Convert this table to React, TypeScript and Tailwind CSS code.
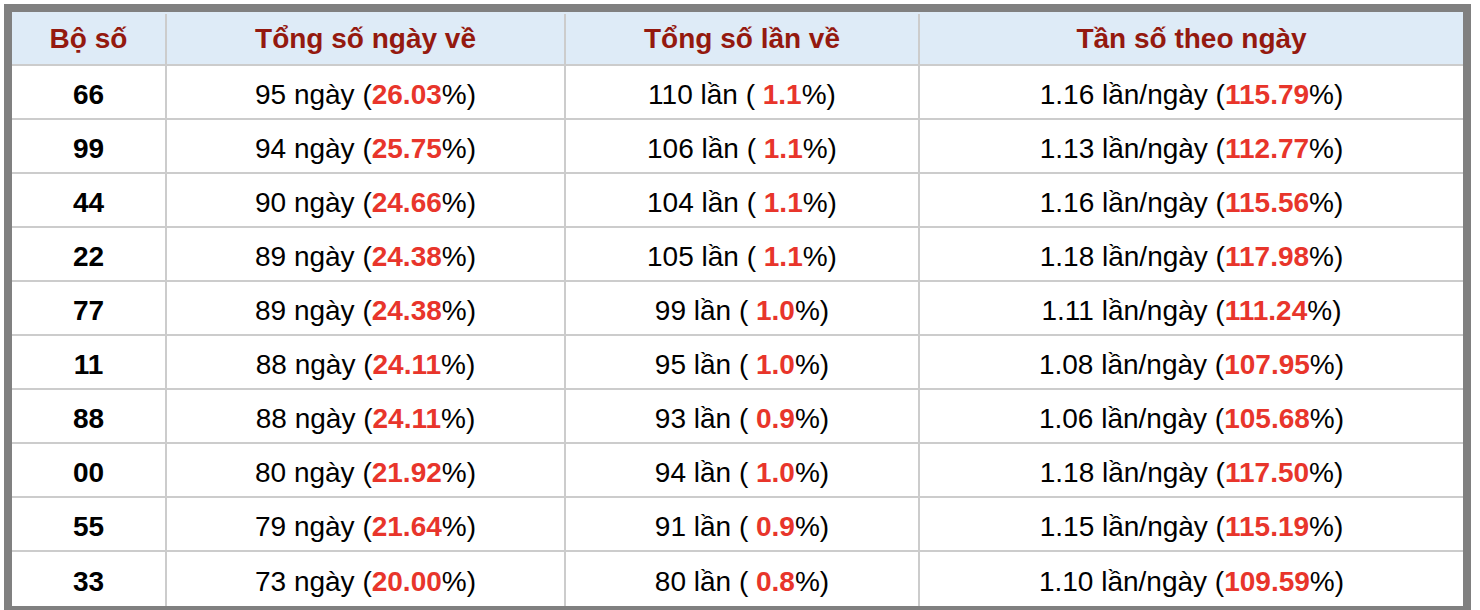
import React from 'react';

type Row = {
  so: string;
  ngay: number;
  ngayPct: string;
  lan: number;
  lanPct: string;
  tanSo: string;
  tanSoPct: string;
};

const rows: Row[] = [
  { so: '66', ngay: 95, ngayPct: '26.03', lan: 110, lanPct: '1.1', tanSo: '1.16', tanSoPct: '115.79' },
  { so: '99', ngay: 94, ngayPct: '25.75', lan: 106, lanPct: '1.1', tanSo: '1.13', tanSoPct: '112.77' },
  { so: '44', ngay: 90, ngayPct: '24.66', lan: 104, lanPct: '1.1', tanSo: '1.16', tanSoPct: '115.56' },
  { so: '22', ngay: 89, ngayPct: '24.38', lan: 105, lanPct: '1.1', tanSo: '1.18', tanSoPct: '117.98' },
  { so: '77', ngay: 89, ngayPct: '24.38', lan: 99, lanPct: '1.0', tanSo: '1.11', tanSoPct: '111.24' },
  { so: '11', ngay: 88, ngayPct: '24.11', lan: 95, lanPct: '1.0', tanSo: '1.08', tanSoPct: '107.95' },
  { so: '88', ngay: 88, ngayPct: '24.11', lan: 93, lanPct: '0.9', tanSo: '1.06', tanSoPct: '105.68' },
  { so: '00', ngay: 80, ngayPct: '21.92', lan: 94, lanPct: '1.0', tanSo: '1.18', tanSoPct: '117.50' },
  { so: '55', ngay: 79, ngayPct: '21.64', lan: 91, lanPct: '0.9', tanSo: '1.15', tanSoPct: '115.19' },
  { so: '33', ngay: 73, ngayPct: '20.00', lan: 80, lanPct: '0.8', tanSo: '1.10', tanSoPct: '109.59' },
];

const Red = ({ children }: { children: React.ReactNode }) => (
  <span className="font-bold text-[#e8352b]">{children}</span>
);

export default function App() {
  return (
    <div className="min-h-screen w-full bg-white pl-[4px] pt-[4px] font-['Liberation_Sans',Arial,sans-serif] text-[28px] text-black">
      <div className="w-[1467px] border-[8px] border-[#808080]">
        {/* Header */}
        <div className="flex h-[54px] border-b-2 border-[#cccccc] bg-[#deebf7] pt-[2px] font-bold text-[#94190f]">
          <div className="flex w-[155px] items-center justify-center border-r-2 border-[#cccccc]">Bộ số</div>
          <div className="flex w-[399px] items-center justify-center border-r-2 border-[#cccccc]">Tổng số ngày về</div>
          <div className="flex w-[354px] items-center justify-center border-r-2 border-[#cccccc]">Tổng số lần về</div>
          <div className="flex flex-1 items-center justify-center">Tần số theo ngày</div>
        </div>

        {/* Rows */}
        {rows.map((r, i) => (
          <div
            key={r.so}
            className={i === rows.length - 1 ? 'flex h-[54px]' : 'flex h-[54px] border-b-2 border-[#cccccc]'}
          >
            <div className="flex w-[155px] items-center justify-center border-r-2 border-[#cccccc] pt-[6px] font-bold">
              {r.so}
            </div>
            <div className="flex w-[399px] items-center justify-center whitespace-pre border-r-2 border-[#cccccc] pt-[6px]">
              {r.ngay} ngày (<Red>{r.ngayPct}</Red>%)
            </div>
            <div className="flex w-[354px] items-center justify-center whitespace-pre border-r-2 border-[#cccccc] pt-[6px]">
              {r.lan} lần ( <Red>{r.lanPct}</Red>%)
            </div>
            <div className="flex flex-1 items-center justify-center whitespace-pre pt-[6px]">
              {r.tanSo} lần/ngày (<Red>{r.tanSoPct}</Red>%)
            </div>
          </div>
        ))}
      </div>
    </div>
  );
}
